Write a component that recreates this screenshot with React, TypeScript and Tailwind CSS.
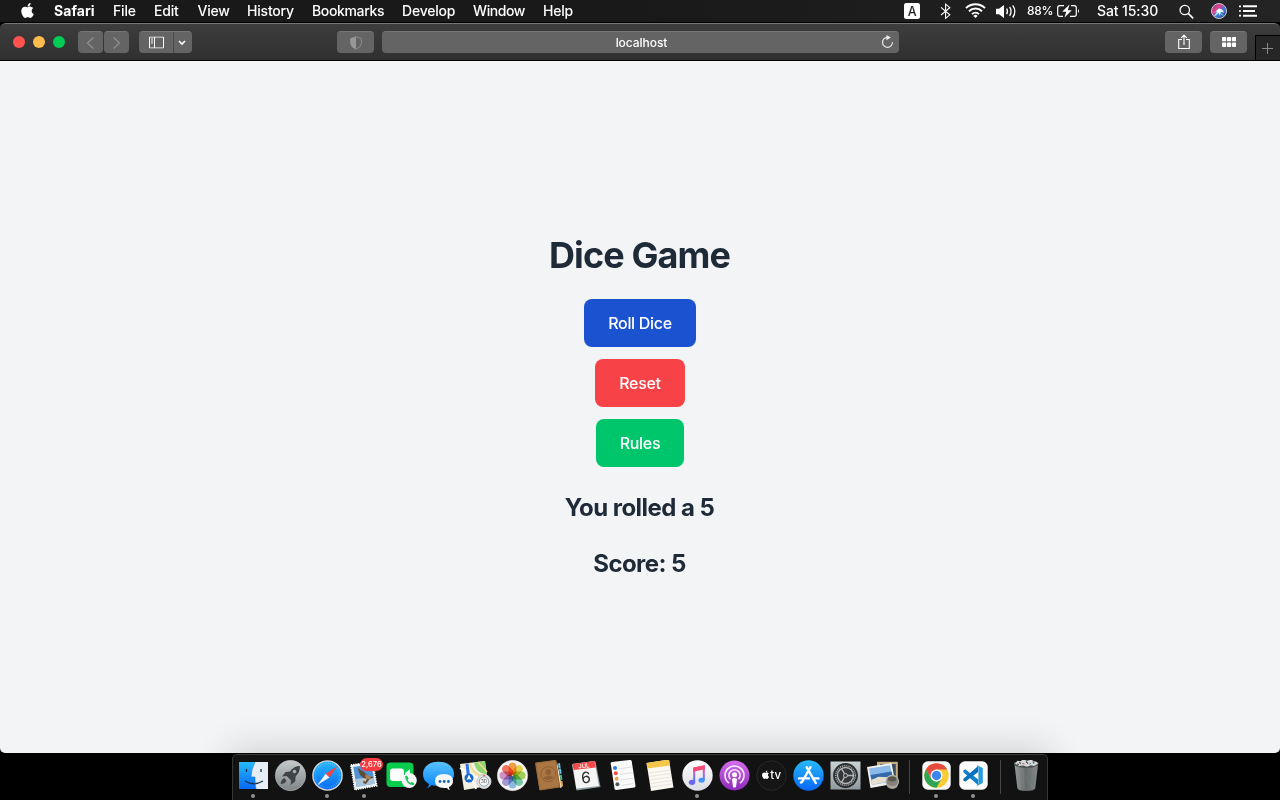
import React, { ReactNode } from "react";
import { FaApple } from "react-icons/fa";

const menus = [
  { label: "File", cls: "w-[41px]" },
  { label: "Edit", cls: "w-[43.5px]" },
  { label: "View", cls: "w-[49.5px]" },
  { label: "History", cls: "w-[65px]" },
  { label: "Bookmarks", cls: "w-[90px] tracking-[-0.35px]" },
  { label: "Develop", cls: "w-[71px]" },
  { label: "Window", cls: "w-[70px] tracking-[-0.4px]" },
  { label: "Help", cls: "w-[40px]" },
];

function MenuBar() {
  return (
    <header className="flex h-[23px] w-full shrink-0 items-center border-b border-black bg-linear-to-r from-[#191919] via-[#191919] to-[#242424] text-[14px] leading-[22px] font-medium tracking-[-0.2px] whitespace-nowrap text-white">
      <FaApple className="ml-[20px] h-[17px] w-[15px] -translate-y-px" />
      <span className="ml-[19px] w-[59px] font-bold tracking-[0.05px]">Safari</span>
      {menus.map((m) => (
        <span key={m.label} className={m.cls}>
          {m.label}
        </span>
      ))}
      <svg className="ml-auto h-[22px] w-[120px] shrink-0" viewBox="0 0 120 22" fill="none" stroke="white">
        <rect x="4" y="3" width="16" height="16" rx="2.2" fill="white" stroke="none" />
        <text x="12" y="15.5" textAnchor="middle" fontSize="12.5" fontWeight="500" fill="#222" stroke="none">A</text>
        <path d="M41 7.4 49.8 14.8 45.6 18.3V4.2L49.8 7.7 41 15" strokeWidth="1.1" />
        <g strokeWidth="2">
          <path d="M66 8.1a13.6 13.6 0 0 1 19 0M69 11.2a9.3 9.3 0 0 1 13 0M72 14.1a5 5 0 0 1 7 0" />
        </g>
        <path d="m75.5 18-2.1-2.1a3 3 0 0 1 4.2 0Z" fill="white" stroke="none" />
        <path d="M96 8.7h3l5-3.6v12.8l-5-3.6h-3Z" fill="white" stroke="none" />
        <path d="M106.6 8.5q1.8 2.8 0 5.6M109.6 6.9q3 4.5 0 8.9M112.7 5.3q4.4 6.1 0 12.2" strokeWidth="1.3" />
      </svg>
      <span className="ml-[7px] w-[30px] text-[12px] tracking-[-0.3px]">88%</span>
      <svg className="h-[22px] w-[23px] shrink-0" viewBox="0 0 23 22" fill="none" stroke="white" strokeWidth="1.2">
        <path d="M7 5.6H2.8Q.7 5.6.7 7.7v6.6q0 2.1 2.1 2.1H6M14 5.6h3.2q2.1 0 2.1 2.1v6.6q0 2.1-2.1 2.1H13" />
        <path d="M12.5 4.5 5.2 11.8h4L7.5 17.5l7.3-7.3h-4Z" fill="white" stroke="none" />
        <path d="M21 9v4q2-2 0-4Z" fill="white" stroke="none" />
      </svg>
      <span className="ml-[17px] w-[82px] tracking-[-0.1px]">Sat 15:30</span>
      <svg className="mr-[19px] h-[22px] w-[82px] shrink-0" viewBox="0 0 82 22" fill="none" stroke="white">
        <circle cx="5.8" cy="10" r="4.7" strokeWidth="1.3" />
        <path d="m9.2 13.4 5 5" strokeWidth="1.6" />
        <defs>
          <linearGradient id="siri" x1="0" y1="0" x2="1" y2="1">
            <stop offset="0" stopColor="#59437e" />
            <stop offset=".35" stopColor="#e83e8c" />
            <stop offset=".6" stopColor="#3d74da" />
            <stop offset="1" stopColor="#263b70" />
          </linearGradient>
        </defs>
        <circle cx="40" cy="11" r="7.5" fill="url(#siri)" stroke="#c9c9d2" />
        <path d="M34 13q4-1 6-5 2 3 6 3-4 0-4 2l3 3q-3-1-5-4-2 4-5 4l3-4Z" fill="#8ff2f2" stroke="none" />
        <path d="M37 11q3-3 5-2 2 1 3 4-3-2-4-1v4l-2-4Z" fill="white" stroke="none" />
        <path d="M64 6.3h14M64 11h12M64 15.7h14" strokeWidth="1.9" />
        <path d="M60 6.3h2M60 11h2M60 15.7h2" strokeWidth="1.7" />
      </svg>
    </header>
  );
}

function ToolButton({ className, children }: { className: string; children?: ReactNode }) {
  return (
    <div className={"flex h-[22px] shrink-0 items-center border-t border-[#767676] bg-[#646464] " + className}>
      {children}
    </div>
  );
}

function Toolbar() {
  return (
    <div className="flex h-[38px] shrink-0 items-start rounded-t-[6px] border-t border-b border-t-[#777] border-b-black bg-linear-to-b from-[#3d3d3d] to-[#303030] pt-[7px]">
      <div className="ml-[13px] flex h-[22px] items-center gap-2">
        <i className="size-3 rounded-full bg-[#ff5350]" />
        <i className="size-3 rounded-full bg-[#fdbc4b]" />
        <i className="size-3 rounded-full bg-[#00cc55]" />
      </div>
      <ToolButton className="ml-[13px] w-[25px] justify-center rounded-[4px]">
        <svg className="h-[14px] w-[9px]" viewBox="0 0 9 14" fill="none" stroke="#8f8f8f" strokeWidth="1.3"><path d="M7.5 1.5 1.5 7l6 5.5" /></svg>
      </ToolButton>
      <ToolButton className="ml-px w-[25px] justify-center rounded-[4px]">
        <svg className="h-[14px] w-[9px]" viewBox="0 0 9 14" fill="none" stroke="#8f8f8f" strokeWidth="1.3"><path d="m1.5 1.5 6 5.5-6 5.5" /></svg>
      </ToolButton>
      <ToolButton className="ml-[10px] w-[53px] rounded-[4px]">
        <span className="flex h-[21px] w-[35px] items-center border-r border-[#4b4b4b] pl-[10px]">
          <svg className="h-[12px] w-[15px] -translate-y-[0.5px]" viewBox="0 0 15 12" fill="none" stroke="white"><path d="M.5.5h14v11H.5ZM5.5.5v11M2 2.5h2M2 4.5h2M2 6.5h2" /></svg>
        </span>
        <svg className="ml-[4px] h-[6px] w-[8px]" viewBox="0 0 8 6" fill="none" stroke="white" strokeWidth="1.6"><path d="m1 1 3 3 3-3" /></svg>
      </ToolButton>
      <ToolButton className="ml-[145px] w-[37px] justify-center rounded-[4px]">
        <svg className="h-[14px] w-[12px]" viewBox="0 0 12 14" fill="none"><path d="M6 .7 11.4 2.5v5Q11 11 6 13.3 1 11 .6 7.5v-5Z" stroke="#8d8d8d" /><path d="M6 .7.6 2.5v5Q1 11 6 13.3Z" fill="#979797" /></svg>
      </ToolButton>
      <ToolButton className="ml-[8px] w-[517px] rounded-[4px]">
        <span className="ml-[20px] flex-1 text-center text-[12px] font-medium tracking-[-0.05px] text-white">localhost</span>
        <svg className="mr-[5px] h-[14px] w-[13px] -translate-y-px" viewBox="0 0 13 14" fill="none"><path d="M6.3 2.3a5 5 0 1 0 5.2 5" stroke="#e8e8e8" strokeWidth="1.2" /><path d="m5.5 0 4.3 2.4-4.3 2.8Z" fill="#eee" /></svg>
      </ToolButton>
      <ToolButton className="ml-[266px] w-[37px] justify-center rounded-[4px]">
        <svg className="h-[16px] w-[12px] -translate-y-px" viewBox="0 0 12 16" fill="none" stroke="white" strokeWidth="1.1"><path d="M4 5.5H.7v9h10.6v-9H8M6 11V1M3.2 3.8 6 1l2.8 2.8" /></svg>
      </ToolButton>
      <ToolButton className="ml-[8px] w-[37px] justify-center rounded-[4px]">
        <svg className="mr-px h-[10px] w-[14px] translate-x-px -translate-y-px" viewBox="0 0 14 10" fill="white">
          {[0, 5, 10].map((x) => [0, 5.6].map((y) => <rect key={x + "-" + y} x={x} y={y} width="4.2" height="4.3" rx=".9" />))}
        </svg>
      </ToolButton>
      <div className="mt-[4px] ml-auto flex h-[25px] w-[25px] items-center justify-center border-t border-l border-black bg-[#262626]">
        <svg className="mr-[2px] h-[11px] w-[11px]" viewBox="0 0 11 11" stroke="#8a8a8a"><path d="M5.5 0v11M0 5.5h11" /></svg>
      </div>
    </div>
  );
}

function DockItem({ running, children }: { running?: boolean; children: ReactNode }) {
  return (
    <div className="flex w-[37px] shrink-0 flex-col items-center">
      <svg className="h-[32px] w-[37px]" viewBox="0 0 37 32" fill="none">{children}</svg>
      {running && <i className="mt-[2px] mr-px size-1 rounded-full bg-[#929292]" />}
    </div>
  );
}

function Separator({ className }: { className: string }) {
  return <div className={"flex shrink-0 justify-center " + className}><i className="h-[34px] w-px bg-[#454545]" /></div>;
}

const petals = ["#fba445", "#ecdc50", "#acd65c", "#7dd0ac", "#8fc2ea", "#a79ddd", "#d797cb", "#fa7b6d"];

function Dock() {
  return (
    <div className="relative flex h-[46px] w-[816px] shrink-0 items-start rounded-t-[5px] border border-b-0 border-[#373737] bg-[#121212] pt-[5px] pl-[2px] shadow-[0_0_36px_4px_rgba(0,0,0,0.16)]">
      <svg className="absolute size-0">
        <defs>
          <linearGradient id="blue" x2="0" y2="1"><stop stopColor="#26b9fa" /><stop offset="1" stopColor="#0868f5" /></linearGradient>
          <linearGradient id="msg" x2="0" y2="1"><stop stopColor="#5bc4ff" /><stop offset="1" stopColor="#0786fa" /></linearGradient>
          <linearGradient id="metal" x2="0" y2="1"><stop stopColor="#c5cacb" /><stop offset="1" stopColor="#7f8587" /></linearGradient>
          <linearGradient id="steel" x2="0" y2="1"><stop stopColor="#c9d3d6" /><stop offset="1" stopColor="#8f999d" /></linearGradient>
          <linearGradient id="white" x2="0" y2="1"><stop stopColor="#fff" /><stop offset="1" stopColor="#dcdce4" /></linearGradient>
          <linearGradient id="pod" x2="0" y2="1"><stop stopColor="#d66bec" /><stop offset="1" stopColor="#8d2bbb" /></linearGradient>
          <linearGradient id="note" x2="0" y2="1"><stop stopColor="#ff4671" /><stop offset=".45" stopColor="#b360df" /><stop offset="1" stopColor="#278cff" /></linearGradient>
          <linearGradient id="bin"><stop stopColor="#949999" /><stop offset=".5" stopColor="#646969" /><stop offset="1" stopColor="#858a8a" /></linearGradient>
        </defs>
      </svg>

      <DockItem running>
        <path d="M4 2h29v27H4Z" fill="#e6edf5" />
        <path d="M4 2h16q-4 8-4 15h4q-.3 5 1 12H4Z" fill="url(#blue)" />
        <path d="M11.5 9v3M26 9v3M10 21q8.5 5.5 18 0" stroke="#183045" strokeWidth="1.3" />
        <path d="M20 2q-4 8-4 15h4q-.3 5 1 12" stroke="#2174bd" strokeWidth=".6" />
      </DockItem>
      <DockItem>
        <circle cx="18.5" cy="15.5" r="15.2" fill="url(#metal)" stroke="#b6b9ba" strokeWidth=".6" />
        <path d="M28 6q-6 0-10 5.4l-4.4.6-3.6 4.6 4.6-.7 4.5 4.5-.5 4.6 4.6-3.6.4-5Q28 12.5 28 6Z" fill="#404448" />
        <path d="M12.5 18q-3 1-4 6 4 0 6-3Z" fill="#404448" />
        <circle cx="22.5" cy="11.6" r="1.8" fill="#a7acae" />
      </DockItem>
      <DockItem running>
        <circle cx="18.5" cy="15.5" r="14.6" fill="url(#blue)" stroke="#d3d6da" strokeWidth="1.4" />
        <circle cx="18.5" cy="15.5" r="12" stroke="#9be2ff" strokeWidth="1.6" strokeDasharray=".5 1.6" opacity=".7" />
        <path d="m28.5 6-8.1 11.6-3.8-3.8Z" fill="#f24444" />
        <path d="m8.5 25 8.1-11.2 3.8 3.8Z" fill="#f0f1f5" />
      </DockItem>
      <DockItem running>
        <path d="m4.8 5 22-3.2 4 24-22 4Z" fill="#e8eff1" stroke="white" strokeWidth="1.5" strokeDasharray="1.3 1" />
        <path d="m7.3 7 18.3-2.8 3 19.5-18 3Z" fill="#4f93d6" />
        <path d="m9.5 19 8-1 10.4-.8.7 6.5-18 3Z" fill="#a9c3d8" />
        <path d="m11.5 8 6 3.5 4 4 6.5 2-4.5 1.5-3.5 5-3-1 1.5-4-4.5-4Z" fill="#604b37" />
        <path d="m19 14.5 6 2-1 3-4-1Z" fill="#ac8553" />
        <path d="m17 18 4 1-2 3Z" fill="#d8cdb4" />
      </DockItem>
      <DockItem>
        <rect x="3.5" y="2.5" width="27" height="24.5" rx="4" fill="#08cd4c" />
        <rect x="7" y="8.5" width="14" height="12.5" rx="3" fill="white" />
        <path d="m22 13 5-4v11l-5-4Z" fill="#e2fff0" />
        <circle cx="26.2" cy="20.5" r="7.6" fill="#f6f7f7" />
        <path d="m22 16.6 1.7-1 2 3-1.2 1.1q.9 2.2 3 3.2l1.3-1.2 2.6 1.8-1.1 1.8q-6.9-.3-8.3-8.7Z" fill="#16c657" />
      </DockItem>
      <DockItem>
        <path d="M6 28q3-1 3-4-6-3-6-10C3 7 9 1.7 18.5 1.7S34 7 34 14s-6 12-15.5 12q-4 0-7-1-2 3-5.5 3Z" fill="url(#msg)" />
        <path d="M30 30q-1-1-1-3 4-2 4-6 0-7-9-7t-9 7 9 7h3q1 2 3 2Z" fill="#f5f6f8" />
        <g fill="#1763ae"><circle cx="20" cy="21.5" r="1.4" /><circle cx="24.2" cy="21.5" r="1.4" /><circle cx="28.4" cy="21.5" r="1.4" /></g>
      </DockItem>
      <DockItem>
        <path d="m3 4 25-3 3 25-24 4Z" fill="#f1efdf" />
        <path d="m17 2.5 11-1.5 2 13q-10 1-13-11.5Z" fill="#8fd473" />
        <path d="m21 2 9 10M13 3q2 12 16 14" stroke="#f3d98a" strokeWidth="1.6" />
        <path d="M5 14q9-1 14 15M3 8l25 14" stroke="white" strokeWidth="2" />
        <path d="m8.5 4 3-.4 2 17-3 .4Z" fill="#3476e8" />
        <circle cx="12" cy="18" r="4.5" fill="#1769d1" /><path d="m12 14.5 2.5 5.5-2.5-1-2.5 1Z" fill="white" />
        <circle cx="27" cy="21.5" r="7" fill="#e2e3e2" stroke="#c9cbcc" /><circle cx="27" cy="21.5" r="4.7" fill="#f7f7f7" stroke="#7c91a1" strokeWidth=".8" />
        <text x="27" y="23.3" textAnchor="middle" fontSize="4.6" fill="#555">3D</text>
        <circle cx="27" cy="15.5" r=".8" fill="#e54848" />
      </DockItem>
      <DockItem>
        <circle cx="18.5" cy="15.5" r="15.2" fill="#f5f5f5" stroke="#d5d5d5" strokeWidth=".5" />
        {petals.map((color, i) => (
          <rect key={color} className="mix-blend-multiply" x="14.6" y="2.5" width="7.8" height="12.6" rx="3.9" fill={color} transform={"rotate(" + i * 45 + " 18.5 15.5)"} />
        ))}
      </DockItem>
      <DockItem>
        <path d="m26 2 5 25-2 1-4-23Z" fill="#eee" />
        <path d="m27 3.5 2-.4.6 5-2 .4ZM28 9l2-.4.6 5-2 .4Z" fill="#6cc3df" />
        <path d="m28.8 15 2-.3.6 5-2 .4Z" fill="#4cb58b" />
        <path d="m29.3 21 2-.3.8 5.5-2.3.4Z" fill="#edaa36" />
        <path d="m4.5 3 20.3-2.7 4 26.7L8.8 30Z" fill="#aa7642" stroke="#9a6837" />
        <circle cx="17.3" cy="14.2" r="7.5" stroke="#8f6035" /><circle cx="17.3" cy="12" r="2.7" fill="#8f6035" /><path d="M12.1 18.2q5-5 10.5-1-4 5-10.5 1Z" fill="#8f6035" />
      </DockItem>
      <DockItem>
        <path d="m4 5 23.5-3.5 5 25.5-24 3.5Z" fill="#8b999f" />
        <path d="m4.5 4 22-3 4.5 25-22.7 2.7Z" fill="#f5f5f5" />
        <path d="m4.5 4 22-3 1.2 6.5L5.6 10Z" fill="#f34949" />
        <text x="16" y="8" textAnchor="middle" fontSize="6" fontWeight="500" fill="white" transform="rotate(-6 16 7)">JUL</text>
        <text x="17.8" y="23" textAnchor="middle" fontSize="15.5" fill="#303030" transform="rotate(-6 18 17)">6</text>
      </DockItem>
      <DockItem>
        <path d="M5.7 3.6q0-1.2 1.2-1.5L25.2-.1q1 0 1.5 1.2l3.8 24.6q0 1.5-1.2 1.7L11.2 30q-1.4 0-1.7-1.5Z" fill="#fafafa" />
        <circle cx="10" cy="8" r="2" fill="#2d7de8" /><circle cx="10.8" cy="13.3" r="2" fill="#f14c49" /><circle cx="11.6" cy="18.7" r="2" fill="#f2a04a" /><circle cx="12.4" cy="24.2" r="2" fill="#4c5960" />
        <path d="m14 9 12.5-2M15 14.5l12.5-1.8M15.7 20l12.5-1.8M16.5 25.3 29 23.5" stroke="#ccc" strokeWidth=".6" />
      </DockItem>
      <DockItem>
        <path d="m4.5 3 22.5-3.5 4.5 28L9 31Z" fill="#faf8ef" />
        <path d="M4.5 3 27-.5l.9 6L5.4 8.5Z" fill="#f5c64a" />
        <path d="m7 13 21-3M7.5 16.5l21-3M8.1 20l21-3M8.7 23.5l21-3M9.3 27l21-3" stroke="#ddd" strokeWidth=".7" />
      </DockItem>
      <DockItem running>
        <circle cx="18.5" cy="15.5" r="15.2" fill="url(#white)" />
        <path d="M15.2 22V8.5L24.8 6.5v13.5" stroke="url(#note)" strokeWidth="2" />
        <path d="m14.2 7.5 11.6-2.2v4l-11.6 2.4Z" fill="#f74a79" /><ellipse cx="13" cy="22.3" rx="3.2" ry="2.6" fill="#6a66f2" /><ellipse cx="22.6" cy="20.2" rx="3.1" ry="2.5" fill="#4692ff" />
      </DockItem>
      <DockItem>
        <circle cx="18.5" cy="15.5" r="15" fill="url(#pod)" />
        <path d="M13 23.2a9.5 9.5 0 1 1 11 0M14.5 19.2a5.6 5.6 0 1 1 8 0" stroke="#f4e9fa" strokeWidth="1.6" />
        <circle cx="18.5" cy="14.8" r="2.5" fill="white" /><path d="M16 19q2.5-1.8 5 0l-1 8q-1.5 1-3 0Z" fill="white" />
      </DockItem>
      <DockItem>
        <circle cx="18.5" cy="15.5" r="14.8" fill="#151515" stroke="#292929" />
        <FaApple x="7.8" y="10" size={9.5} color="white" />
        <text x="17.3" y="19" fontSize="11.5" fontWeight="500" fill="white">tv</text>
      </DockItem>
      <DockItem>
        <circle cx="18.5" cy="15.5" r="15.2" fill="url(#blue)" />
        <path d="M20.5 7.2 12 22M16.6 7.2 25.8 23M9 18.4h10M23 18.4h5.5" stroke="white" strokeWidth="2.4" strokeLinecap="round" /><path d="m11.4 21.5-1 2" stroke="white" strokeWidth="2" />
      </DockItem>
      <DockItem>
        <path d="M3.5 1.5h30v28h-30Z" fill="url(#steel)" />
        <circle cx="18.5" cy="15.5" r="12.4" fill="#2a2d2f" />
        <circle cx="18.5" cy="15.5" r="9.8" stroke="#9da0a0" strokeWidth="1.6" strokeDasharray="1.2 .8" />
        <circle cx="18.5" cy="15.5" r="8" fill="#343739" stroke="#aeb1b1" strokeWidth="1.4" />
        <path d="M18.5 15.5h8M18.5 15.5l-4-7M18.5 15.5l-4 7" stroke="#b5b7b7" strokeWidth="1.5" /><circle cx="18.5" cy="15.5" r="2" fill="#3b3e40" stroke="#bbb" />
      </DockItem>
      <DockItem>
        <path d="M13 1.8h20.8v21H13Z" fill="#c9ad82" /><path d="M16 4h15.8v16H16Z" fill="#394d62" />
        <path d="m3 7 24.5-4 4 20.5L6.5 28Z" fill="#f2f2ee" />
        <path d="m5 8.5 21-3.3 3.2 16L8 25Z" fill="#8ab9ea" /><path d="m6.5 15 21-3.5 1 4.5-21 3.5Z" fill="#3468a8" /><path d="m7.5 20 7-3.3 13 .8.7 3-20.2 4.3Z" fill="#e6dfcd" />
        <circle cx="28.2" cy="21.5" r="6.2" fill="#85817a" stroke="#b5b5b0" strokeWidth="1.2" /><path d="M23.5 24q5 4 9.8 0v3q-5 4-9.8 0Z" fill="#aaa49a" /><ellipse cx="28.2" cy="19" rx="4.2" ry="2.4" fill="#5b564d" />
      </DockItem>

      <Separator className="w-[17px]" />

      <DockItem running>
        <rect x="4.3" y="1.3" width="28.4" height="28.4" rx="5.5" fill="#f7f7f7" />
        <circle cx="18.5" cy="15.5" r="12.2" fill="#f9cc37" />
        <path d="M18.5 9.6h10.7A12.2 12.2 0 0 0 7.9 9.4l5.5 9.2q-1-7 5.1-9Z" fill="#e64b3f" />
        <path d="M7.9 9.4A12.2 12.2 0 0 0 18.4 27.7l5.3-9.2q-5.2 6.2-10.4.2Z" fill="#2da555" />
        <circle cx="18.5" cy="15.5" r="6" fill="white" /><circle cx="18.5" cy="15.5" r="4.7" fill="#3d86ed" />
      </DockItem>
      <DockItem running>
        <rect x="4.3" y="1.3" width="28.4" height="28.4" rx="5.5" fill="#fcfcfc" />
        <path d="m8.2 10.8 2-1.5 13 10.1v5.8L8.4 12.3Z" fill="#117fc9" /><path d="m8.2 20.2 2 1.5L23.2 12V6L8.4 18.7Z" fill="#0871bd" />
        <path d="m22.7 5.6 5.1 2.5v15l-5.1 2.5q-.5.2-1-.5l1.7-1V7l-1.7-1q.5-.6 1-.4Z" fill="#269bdd" />
      </DockItem>

      <Separator className="w-[16px]" />

      <DockItem>
        <path d="m6.3 2.5 3 25.5q.4 3 9 3t9-3l3-25.5Z" fill="url(#bin)" />
        <path d="m10 8 2 20M15 8l1 21M20 8v21M25 8l-2 20M12 8l13 20M24 8 12 28" stroke="#b1b5b5" strokeWidth=".5" opacity=".2" />
        <path d="M6.3 3q12 7 24 0l-.4 2.5q-11.5 5-23.2 0Z" fill="#4c5050" />
        <path d="m7 3.5 2.5-2.8 3 .6 2.5-2 4 1.4L23-.4l3 1.6 2.5.5 1.5 2-4 2.2-3-.8-4 1.6-4-1.5-4 .7Z" fill="#d7d9d9" />
        <path d="m11 2.5 2 1m5-2 2 2m5-2 1 2M9 4l2 .5" stroke="#43535a" strokeWidth="1.2" /><path d="m14.5 3.5 2 .5" stroke="#c74748" /><path d="m21.5 4 1.5-.5" stroke="#3c8c8f" />
      </DockItem>
      <span className="absolute top-[3px] left-[127px] flex h-[13px] w-[23px] items-center justify-center rounded-full bg-[#f53b40] text-[7.5px] leading-none font-medium text-white">2,676</span>
    </div>
  );
}

export default function App() {
  return (
    <div className="flex h-[800px] w-[1280px] flex-col overflow-hidden bg-black font-['Inter','Liberation_Sans',sans-serif]">
      <MenuBar />
      <Toolbar />
      <main className="flex h-[692px] shrink-0 flex-col items-center justify-center rounded-b-[5px] bg-[#f3f4f6] text-[#1e2a37]">
        <h1 className="mb-6 pr-px text-4xl font-bold tracking-[-0.9px]">Dice Game</h1>
        <div className="flex flex-col items-center gap-3 font-medium tracking-[-0.3px] text-white">
          <button className="h-12 w-[112px] rounded-lg bg-[#1b52d0]">Roll Dice</button>
          <button className="h-12 w-[90px] rounded-lg bg-[#f74247]">Reset</button>
          <button className="h-12 w-[88px] rounded-lg bg-[#00c66b]">Rules</button>
        </div>
        <p className="mt-[25px] pr-px text-2xl font-bold tracking-[-0.55px]">You rolled a 5</p>
        <p className="mt-6 -mb-px pr-px text-2xl font-bold tracking-[-0.6px]">Score: 5</p>
      </main>
      <footer className="mt-px flex justify-center">
        <Dock />
      </footer>
    </div>
  );
}
